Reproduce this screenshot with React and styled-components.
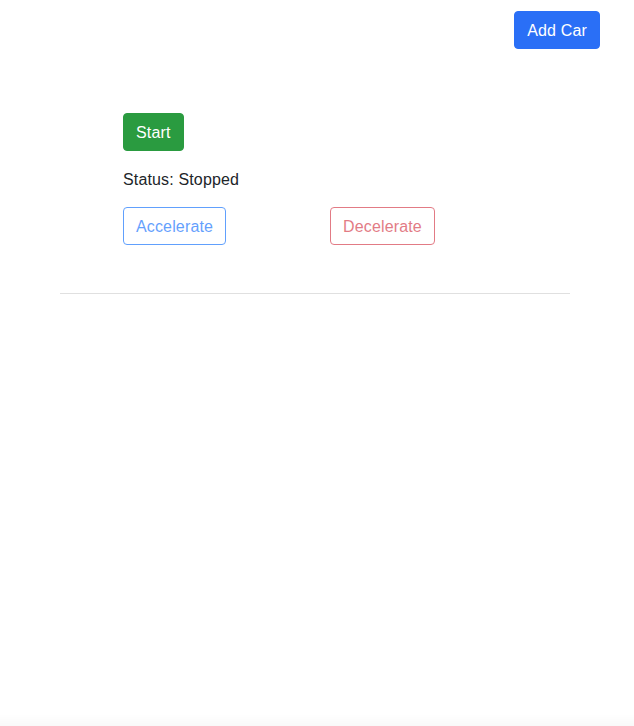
import React from "react";
import styled, { createGlobalStyle, css } from "styled-components";

const Global = createGlobalStyle`
  html, body { margin: 0; padding: 0; background: #fff; }
  body {
    font-family: "Liberation Sans", Arial, Helvetica, sans-serif;
    font-size: 16px;
    line-height: 1.5;
    color: #212529;
    letter-spacing: 0.15px;
  }
  * { box-sizing: border-box; }
`;

const TopBar = styled.div`
  display: flex;
  justify-content: flex-end;
  padding: 11px 34px 0 0;
`;

const variants = {
  primary: css`
    background: #2a6ff6;
    border-color: #2a6ff6;
    color: #fff;
  `,
  success: css`
    background: #2a9b40;
    border-color: #2a9b40;
    color: #fff;
  `,
  outlinePrimary: css`
    background: transparent;
    border-color: #0d6efd;
    color: #0d6efd;
  `,
  outlineDanger: css`
    background: transparent;
    border-color: #d43545;
    color: #d43545;
  `,
};

const Button = styled.button`
  font-family: inherit;
  font-size: 16px;
  line-height: 24px;
  letter-spacing: 0.15px;
  padding: 7px 12px 5px;
  border: 1px solid transparent;
  border-radius: 4px;
  cursor: pointer;
  ${(p) => variants[p.$variant]}
  &:disabled {
    opacity: 0.65;
    cursor: default;
  }
`;

const Section = styled.section`
  margin: 64px 64px 0 60px;
  padding: 0 0 48px 63px;
  border-bottom: 1px solid #e0e0e0;
`;

const Status = styled.p`
  margin: 16px 0;
  padding-top: 1px;
  height: 24px;
  box-sizing: border-box;
`;

const Controls = styled.div`
  display: grid;
  grid-template-columns: 207px 207px;
  justify-items: start;
`;

const BottomShade = styled.div`
  position: fixed;
  left: 0;
  right: 0;
  bottom: 0;
  height: 12px;
  background: linear-gradient(to bottom, rgba(0,0,0,0), rgba(0,0,0,0.025));
  pointer-events: none;
`;

export default function App() {
  return (
    <>
      <Global />
      <TopBar>
        <Button $variant="primary">Add Car</Button>
      </TopBar>
      <Section>
        <Button $variant="success">Start</Button>
        <Status>Status: Stopped</Status>
        <Controls>
          <Button $variant="outlinePrimary" disabled>Accelerate</Button>
          <Button $variant="outlineDanger" disabled>Decelerate</Button>
        </Controls>
      </Section>
      <BottomShade />
    </>
  );
}
